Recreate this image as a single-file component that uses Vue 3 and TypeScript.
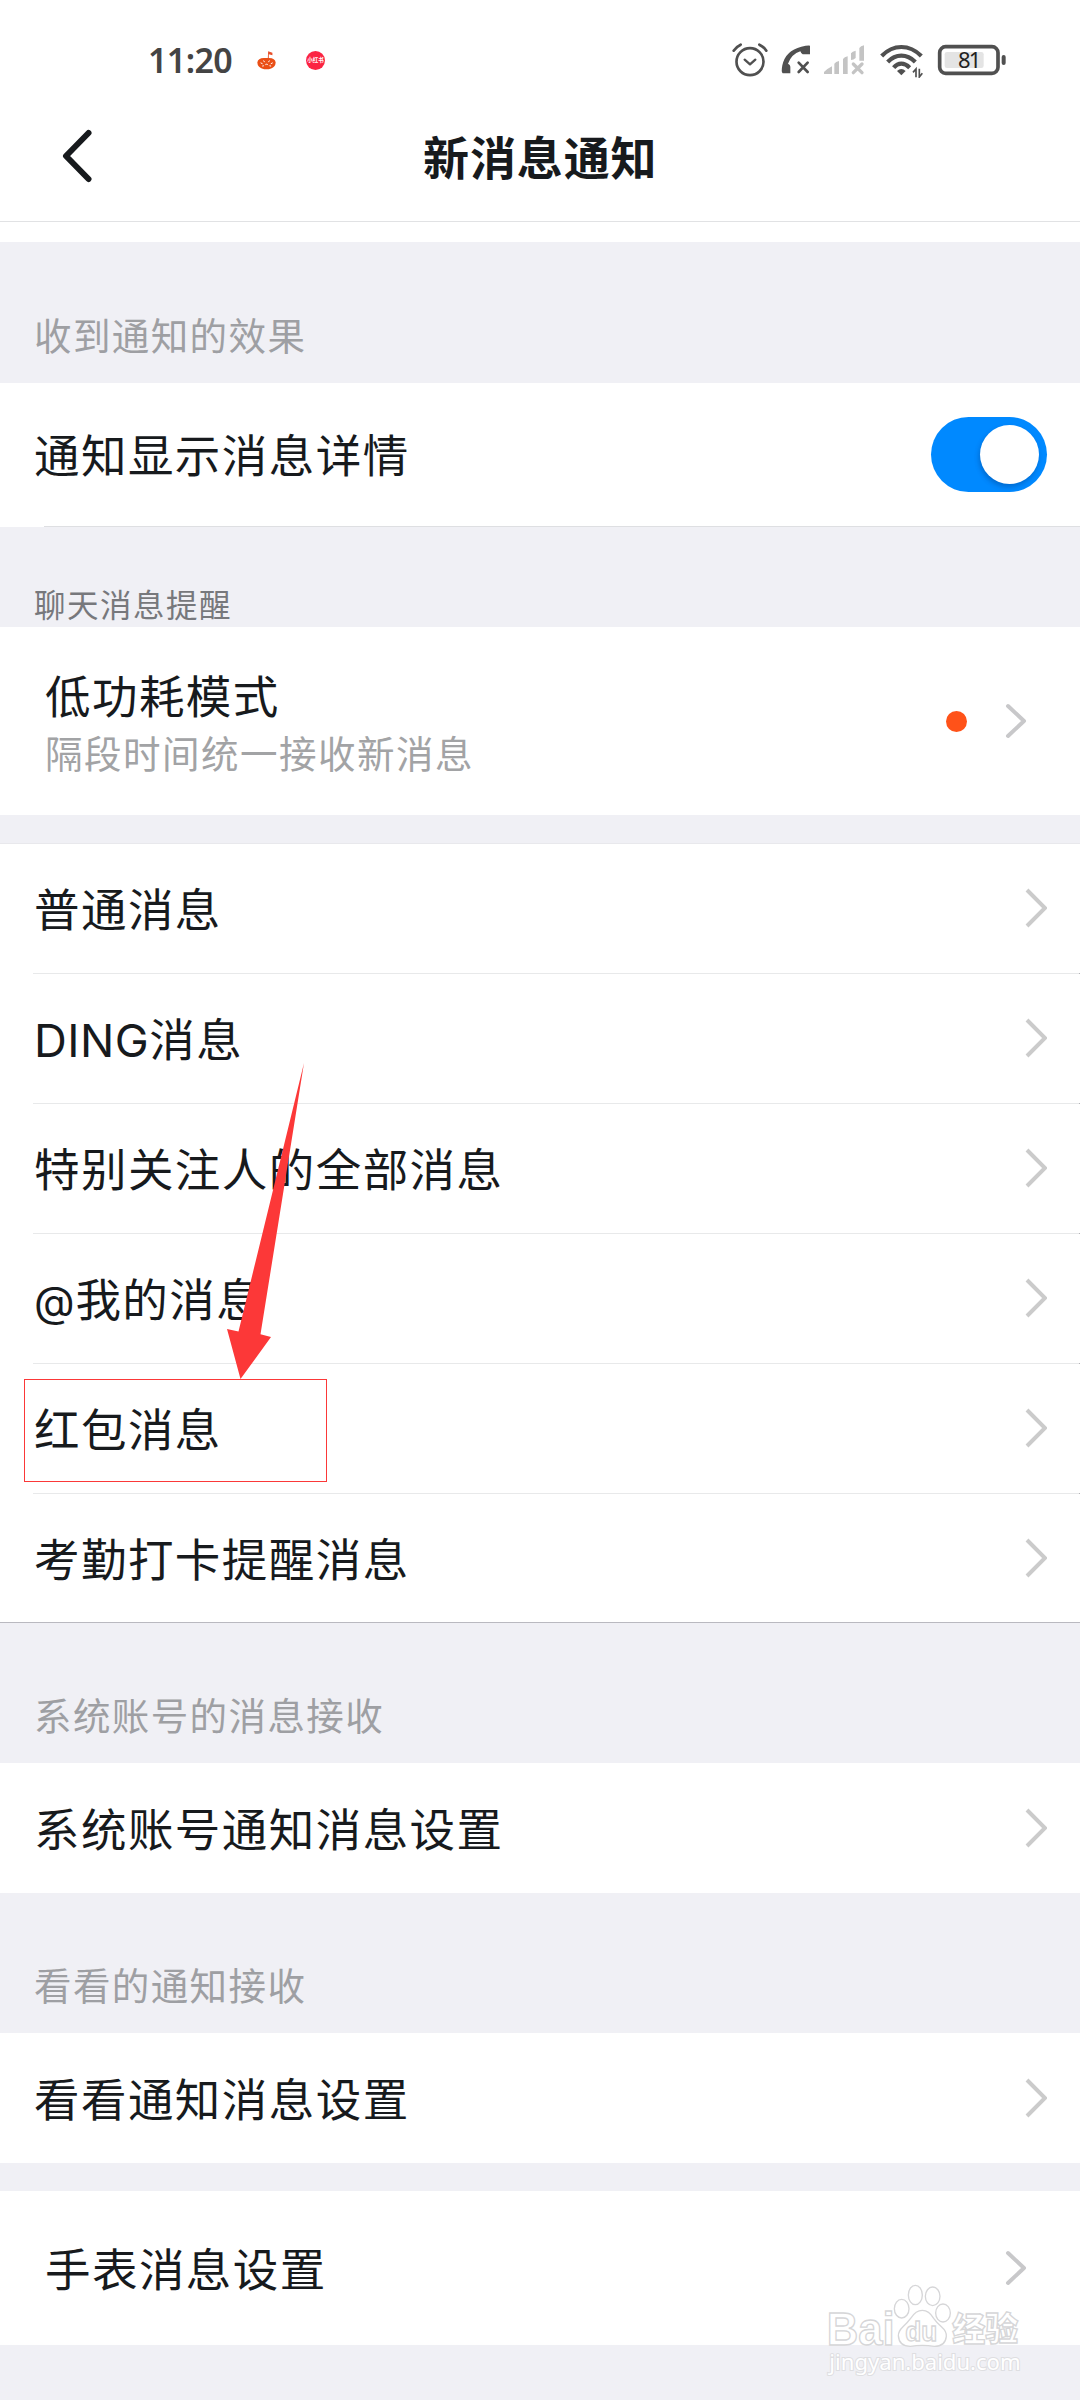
<script setup lang="ts">
interface Row {
  latin?: string
  label: string
  marked?: boolean
}

const messageRows: Row[] = [
  { label: '普通消息' },
  { latin: 'DING', label: '消息' },
  { label: '特别关注人的全部消息' },
  { latin: '@', label: '我的消息' },
  { label: '红包消息', marked: true },
  { label: '考勤打卡提醒消息' },
]
</script>

<template>
  <div class="screen">
    <header class="status">
      <span class="clock">11:20</span>
      <svg class="ico-pumpkin" viewBox="376 58 64 64" width="21" height="21">
        <path d="M413 62l13 4v8l-11-3v12h-3z" fill="#e8502a" />
        <path d="M380 96q2-14 20-14h16q18 0 20 14-1 14-14 18-14 6-28 0-13-4-14-18z" fill="#ea4f16" />
        <path d="M390 97l6 3M399 90l3 5M417 90l-3 5M427 97l-6 3M395 107l5-1M422 107l-5-1M405 104l3-4 4 4" stroke="#fff" stroke-width="3" fill="none" />
      </svg>
      <span class="ico-red">小红书</span>
      <div class="status-right">
        <svg viewBox="30 36 114 108" width="38" height="36" fill="none" stroke="#505050" stroke-linecap="round" stroke-linejoin="round">
          <circle cx="87" cy="95" r="40.500" stroke-width="8" />
          <path d="M38 62q8-12 21-18M115 44q13 6 21 18" stroke-width="8" />
          <path d="M71 89l16 14 16-14" stroke-width="7" />
        </svg>
        <svg viewBox="180 36 96 108" width="32" height="36">
          <path d="M188 130q-5-4-1-24q9-44 57-56q18-4 26-3v26h-22q-4-1-7-9q-26 8-37 37q7 3 7 9v20z" fill="#505050" />
          <path d="M236 98l27 28M263 98l-27 28" stroke="#505050" stroke-width="8" stroke-linecap="round" />
        </svg>
        <svg viewBox="306 36 132 108" width="44" height="36" fill="#c4c4c4">
          <path d="M312 132v-6q10-10 24-17v23zM343 132v-31q4-6 14-8v39zM369 132v-45q4-6 14-8v53zM393 90v-20q4-6 14-8v22q-6 6-14 6zM418 92v-38q4-6 14-8v46z" />
          <path d="M400 102l26 26M426 102l-26 26" stroke="#c4c4c4" stroke-width="10" stroke-linecap="round" />
        </svg>
        <svg viewBox="476 36 138 108" width="46" height="36" fill="none" stroke="#505050" stroke-width="12.500">
          <path d="M484 78q26-27 59-27t60 27M502 96q18-19 41-19t42 19M520 113q10-12 23-12t25 12" />
          <path d="M530 123q13-12 26 0l-13 13z" fill="#505050" stroke="none" />
          <path d="M587 142v-25l-9 10M597 116v25l9-11" stroke-width="5" />
        </svg>
        <svg class="battery" viewBox="649 36 216 108" width="72" height="36">
          <rect x="660" y="50" width="175" height="80" rx="18" fill="none" stroke="#505050" stroke-width="11" />
          <rect x="675" y="66" width="117" height="48" rx="7" fill="#e4e4e4" />
          <rect x="846" y="75" width="12" height="30" rx="6" fill="#505050" />
          <text x="750" y="115" text-anchor="middle" textLength="70" font-size="66" fill="#222">81</text>
        </svg>
      </div>
    </header>

    <nav class="navbar">
      <svg class="back" viewBox="0 0 32 54" width="32" height="54" fill="none" stroke="#171a1d" stroke-width="6" stroke-linecap="round" stroke-linejoin="round">
        <path d="M27.500 4L5 27l22.500 23" />
      </svg>
      <h1>新消息通知</h1>
    </nav>
    <div class="spacer"></div>

    <div class="section tall">收到通知的效果</div>
    <div class="row detail">
      <span class="label">通知显示消息详情</span>
      <span class="toggle"><i></i></span>
    </div>

    <div class="section small">聊天消息提醒</div>
    <div class="row power">
      <div class="stack">
        <span class="label">低功耗模式</span>
        <span class="hint">隔段时间统一接收新消息</span>
      </div>
      <i class="dot"></i>
      <svg class="chev" viewBox="0 0 22 36" width="22" height="36"><path d="M3 3l16 15L3 33" /></svg>
    </div>

    <div class="gap lined"></div>
    <div v-for="row in messageRows" :key="row.label" class="row item">
      <span class="label"><span v-if="row.latin" class="latin" :class="{ at: row.latin === '@' }">{{ row.latin }}</span>{{ row.label }}</span>
      <svg class="chev sharp" viewBox="0 0 22 40" width="22" height="40"><path d="M2 2l18 18L2 38" /></svg>
      <span v-if="row.marked" class="mark"></span>
      <svg v-if="row.marked" class="arrow" viewBox="0 0 46 318" width="46" height="318">
        <path d="M77 0L11.500 268.500L0 266L13.500 316L44 274L33.500 271.300Z" />
      </svg>
    </div>

    <div class="section mid">系统账号的消息接收</div>
    <div class="row plain">
      <span class="label">系统账号通知消息设置</span>
      <svg class="chev sharp" viewBox="0 0 22 40" width="22" height="40"><path d="M2 2l18 18L2 38" /></svg>
    </div>

    <div class="section mid">看看的通知接收</div>
    <div class="row plain">
      <span class="label">看看通知消息设置</span>
      <svg class="chev sharp" viewBox="0 0 22 40" width="22" height="40"><path d="M2 2l18 18L2 38" /></svg>
    </div>

    <div class="gap"></div>
    <div class="row watch">
      <span class="label">手表消息设置</span>
      <svg class="chev" viewBox="0 0 22 36" width="22" height="36"><path d="M3 3l16 15L3 33" /></svg>
    </div>

    <svg class="watermark" viewBox="135 365 600 295" width="200" height="98.300">
      <g fill="#fff" stroke="#d6d6d8" stroke-width="4">
        <ellipse cx="365" cy="445" rx="22" ry="28" />
        <ellipse cx="406" cy="404" rx="21" ry="29" />
        <ellipse cx="458" cy="408" rx="22" ry="28" />
        <ellipse cx="489" cy="458" rx="22" ry="27" />
        <path d="M427 450q20 0 34 24q10 14 24 26q15 13 14 28q-3 30-36 30q-18-3-36-3t-36 3q-34 0-36-32q0-14 14-27q14-12 24-26q14-23 34-23z" />
        <text class="wm-bai" x="140" y="554" textLength="204" lengthAdjust="spacingAndGlyphs" font-size="136">Bai</text>
        <text class="wm-bai" x="376" y="541" textLength="96" lengthAdjust="spacingAndGlyphs" font-size="82">du</text>
        <text class="wm-cn" x="517" y="543" textLength="198" font-size="99">经验</text>
        <text class="wm-url" x="148" y="630" textLength="574" lengthAdjust="spacingAndGlyphs" font-size="66" stroke="#dedee1" stroke-width="6" paint-order="stroke">jingyan.baidu.com</text>
      </g>
    </svg>
  </div>
</template>

<style>
body {
  margin: 0;
  background: #f0f0f5;
}
</style>

<style scoped>
.screen {
  position: relative;
  width: 1080px;
  height: 2400px;
  overflow: hidden;
  background: #f0f0f5;
  color: #171a1d;
  font-family: "Noto Sans CJK SC", "Noto Sans", sans-serif;
}
svg {
  display: block;
  flex: none;
}
.status {
  display: flex;
  align-items: center;
  height: 120px;
  box-sizing: border-box;
  padding: 0 72px 0 148px;
  background: #fff;
}
.clock {
  width: 86px;
  font: 600 34px/40px "Noto Sans", sans-serif;
  letter-spacing: -0.6px;
  color: #444;
  white-space: nowrap;
}
.ico-pumpkin {
  margin-left: 22px;
}
.ico-red {
  width: 19px;
  height: 19px;
  margin-left: 29px;
  border-radius: 50%;
  background: #fb2442;
  color: #fff;
  font-size: 5.5px;
  font-weight: 700;
  line-height: 18px;
  text-align: center;
  white-space: nowrap;
}
.status-right {
  display: flex;
  align-items: center;
  margin-left: auto;
  gap: 11.500px;
}
.status-right svg:nth-child(2) {
  margin-right: -1.500px;
}
.status-right svg:nth-child(4) {
  margin-left: 1px;
}
.battery text {
  font-family: "Noto Sans", sans-serif;
}
.navbar {
  display: flex;
  align-items: center;
  height: 101px;
  box-sizing: content-box;
  border-bottom: 1px solid #e1e2e4;
  background: #fff;
}
.back {
  margin: -29px 0 0 61px;
}
.navbar h1 {
  margin: -32px 0 0 330px;
  font-size: 46px;
  font-weight: 700;
  line-height: 60px;
  letter-spacing: 0.9px;
}
.spacer {
  height: 20px;
  background: #fff;
}
.section {
  display: flex;
  align-items: flex-end;
  box-sizing: border-box;
  padding: 0 34px 21px;
  color: #9e9fa3;
  font-size: 37.5px;
  line-height: 56px;
  letter-spacing: 1.4px;
}
.tall {
  height: 141px;
}
.mid {
  height: 140px;
}
.small {
  height: 100px;
  padding-bottom: 4px;
  color: #77787c;
  font-size: 31.5px;
  line-height: 40px;
  letter-spacing: 1.5px;
}
.row {
  position: relative;
  display: flex;
  align-items: center;
  box-sizing: border-box;
  height: 130px;
  padding: 0 33px 0 34px;
  background: #fff;
}
.label {
  flex: 1;
  padding-bottom: 3px;
  font-size: 45.5px;
  line-height: 60px;
  letter-spacing: 1.45px;
  white-space: nowrap;
}
.latin {
  font-family: Inter, sans-serif;
  font-size: 45.5px;
  line-height: 0;
  letter-spacing: 0.5px;
}
.at {
  font-size: 42px;
  letter-spacing: 0.8px;
}
.chev {
  fill: none;
  stroke: #c8c8ca;
  stroke-width: 4;
  stroke-linecap: round;
  stroke-linejoin: round;
}
.chev.sharp {
  stroke: #cbcbcb;
  stroke-linecap: butt;
  stroke-linejoin: miter;
}
.detail {
  height: 144px;
  padding-bottom: 2px;
}
.item {
  padding-bottom: 2px;
}
.detail::after,
.item::after {
  content: "";
  position: absolute;
  left: 44px;
  right: 0;
  bottom: 0;
  height: 1px;
  background: #dedfe2;
}
.toggle {
  display: flex;
  align-items: center;
  justify-content: flex-end;
  box-sizing: border-box;
  width: 116px;
  height: 75px;
  padding-right: 8px;
  border-radius: 38px;
  background: #0089ff;
}
.toggle i {
  width: 59px;
  height: 59px;
  border-radius: 50%;
  background: #fff;
  box-shadow: -1px 3px 5px rgba(0, 40, 100, 0.3);
}
.power {
  height: 188px;
  padding: 0 53px 0 45px;
}
.stack {
  display: flex;
  flex: 1;
  flex-direction: column;
  padding-top: 2px;
}
.stack .label {
  flex: none;
  padding: 0;
}
.hint {
  color: #a2a3a5;
  font-size: 37.5px;
  line-height: 56px;
  letter-spacing: 1.5px;
}
.dot {
  width: 21px;
  height: 21px;
  margin: 1px 38px 0 0;
  border-radius: 50%;
  background: #ff5219;
}
.power .chev {
  margin-top: -1px;
}
.gap {
  height: 28px;
}
.lined {
  border-bottom: 1px solid #e8e8ec;
}
.item::after {
  left: 33px;
  background: linear-gradient(90deg, #e8e9ea calc(100% - 1px), #b4b4b8 0);
}
.item:has(+ .section) {
  height: 129px;
  padding-bottom: 1px;
}
.item:has(+ .section)::after {
  left: 0;
  background: #b9b9c0;
}
.mark {
  position: absolute;
  left: 24px;
  top: 15px;
  width: 303px;
  height: 103px;
  box-sizing: border-box;
  border: 1px solid #fb3838;
}
.arrow {
  position: absolute;
  left: 227px;
  top: -301px;
  overflow: visible;
  fill: #fc3838;
}
.watch {
  height: 154px;
  padding: 0 53px 0 45px;
}
.watermark {
  position: absolute;
  left: 825px;
  top: 2281.700px;
}
.wm-bai {
  font-family: "Liberation Sans", sans-serif;
  font-weight: 700;
}
.wm-cn {
  font-family: "Noto Sans CJK SC", sans-serif;
  font-weight: 900;
}
.wm-url {
  font-family: "Noto Sans", sans-serif;
}
</style>
